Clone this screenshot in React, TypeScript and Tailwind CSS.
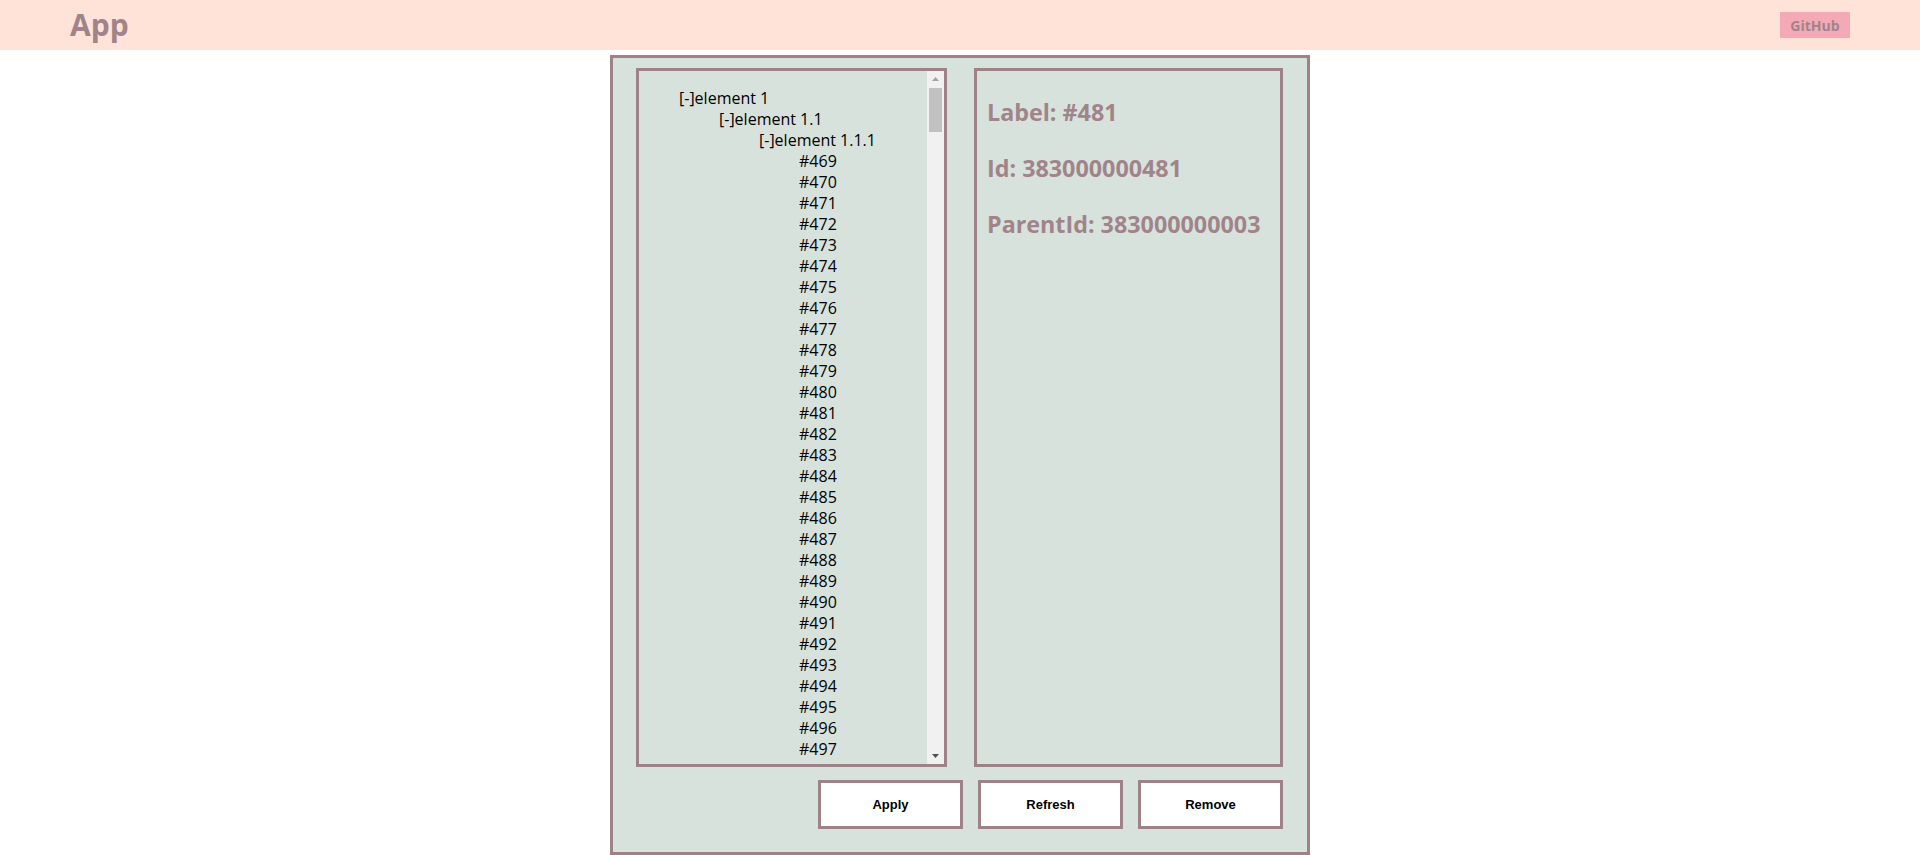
const nodes = Array.from({ length: 29 }, (_, i) => `#${469 + i}`);

const TreePanel = () => {
  return (
    <div className="relative w-[311px] h-[699px] border-[3px] border-[#9e8288] overflow-hidden">
      <div className="h-full overflow-hidden pr-[17px]">
        <ul className="mt-[17px] pl-[40px] text-[16px] leading-[21px] text-black">
          <li>
            [-]element 1
            <ul className="pl-[40px]">
              <li>
                [-]element 1.1
                <ul className="pl-[40px]">
                  <li>
                    [-]element 1.1.1
                    <ul className="pl-[40px]">
                      {nodes.map((n) => (
                        <li key={n}>{n}</li>
                      ))}
                    </ul>
                  </li>
                </ul>
              </li>
            </ul>
          </li>
        </ul>
      </div>
      {/* scrollbar */}
      <div className="absolute top-0 right-0 bottom-0 w-[17px] bg-[#f1f1f1]">
        <div className="flex justify-center pt-[6px]">
          <svg width="7" height="4" viewBox="0 0 7 4">
            <polygon points="3.5,0 7,4 0,4" fill="#a3a3a3" />
          </svg>
        </div>
        <div className="absolute top-[17px] left-[2px] w-[13px] h-[44px] bg-[#c1c1c1]" />
        <div className="absolute bottom-[6px] left-0 right-0 flex justify-center">
          <svg width="7" height="4" viewBox="0 0 7 4">
            <polygon points="0,0 7,0 3.5,4" fill="#505050" />
          </svg>
        </div>
      </div>
    </div>
  );
};

const InfoPanel = () => {
  const rows = ["Label: #481", "Id: 383000000481", "ParentId: 383000000003"];
  return (
    <div className="w-[309px] h-[699px] border-[3px] border-[#9e8288] px-[10px] pt-[25px]">
      {rows.map((r) => (
        <h2
          key={r}
          className="text-[23.3px] font-bold leading-[32px] mb-[24px] text-[#a0848a] whitespace-nowrap"
        >
          {r}
        </h2>
      ))}
    </div>
  );
};

export default function App() {
  const buttons = ["Apply", "Refresh", "Remove"];
  return (
    <div className="min-h-screen bg-white" style={{ fontFamily: '"Open Sans", sans-serif' }}>
      <header className="h-[50px] bg-[#ffe3d9] flex items-center justify-between px-[70px]">
        <h1 className="text-[30px] font-bold text-[#a0848a] leading-none">App</h1>
        <a
          href="#"
          className="w-[70px] h-[26px] bg-[#f4a9b6] text-[#a0848a] text-[14px] font-bold flex items-center justify-center"
        >
          GitHub
        </a>
      </header>
      <main className="mx-auto mt-[5px] w-[700px] h-[800px] border-[3px] border-[#9e8288] bg-[#d8e2dd] pt-[10px] pl-[23px] pr-[24px] pb-[23px] flex flex-col">
        <div className="flex gap-[27px]">
          <TreePanel />
          <InfoPanel />
        </div>
        <div className="flex justify-end gap-[15px] mt-[13px]">
          {buttons.map((b) => (
            <button
              key={b}
              className="w-[145px] h-[49px] border-[3px] border-[#9e8288] bg-white text-[13px] font-bold text-black"
              style={{ fontFamily: '"Liberation Sans", Arial, sans-serif' }}
            >
              {b}
            </button>
          ))}
        </div>
      </main>
    </div>
  );
}
